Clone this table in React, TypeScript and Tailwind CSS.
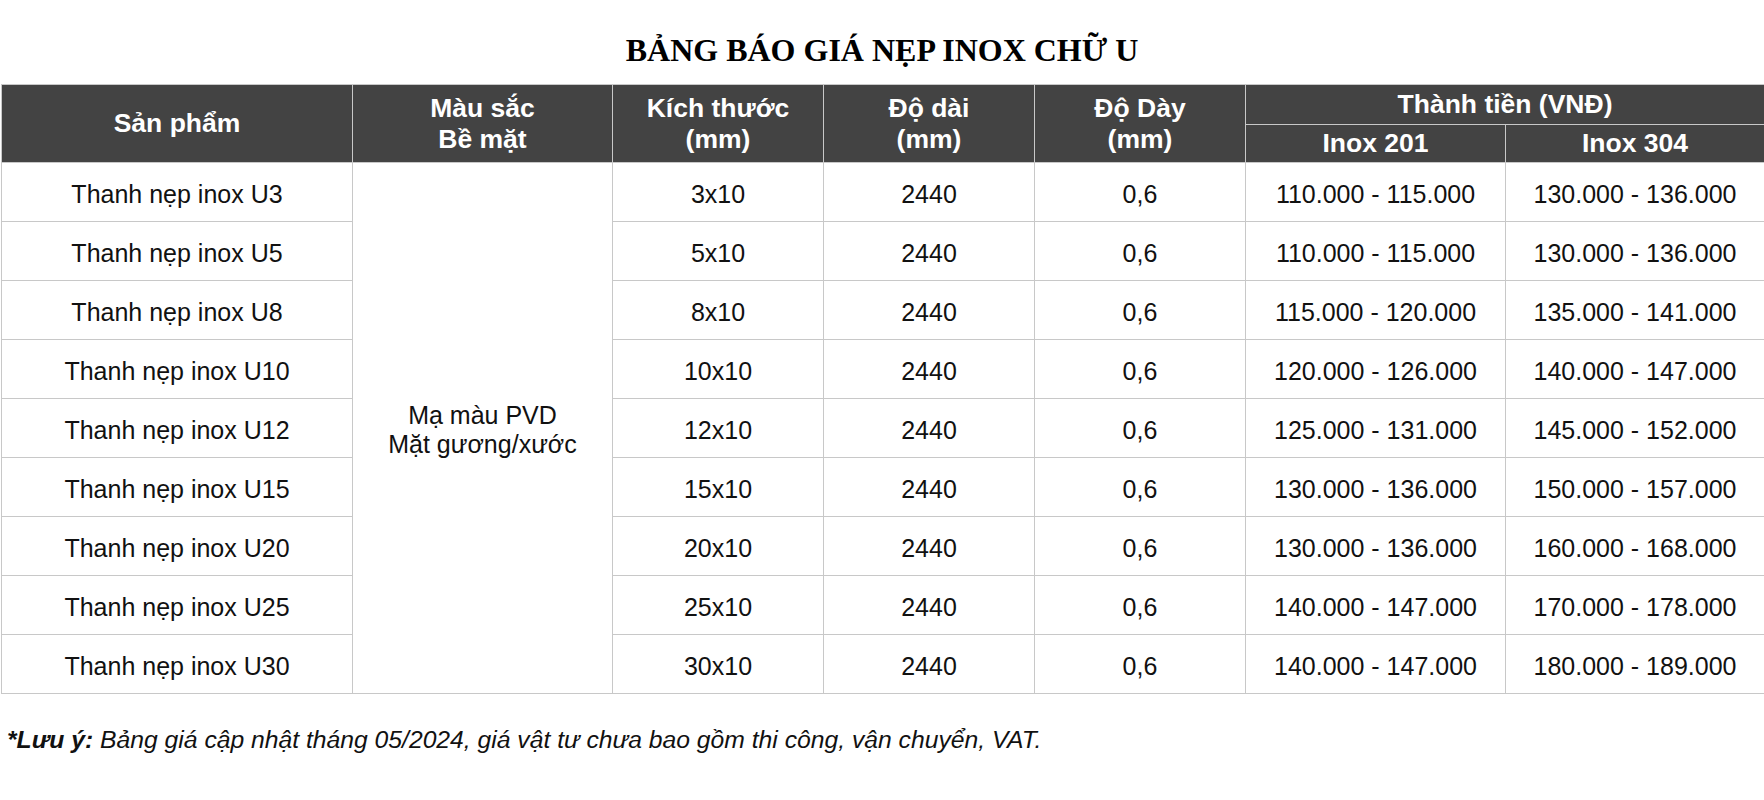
const ROWS = [
  { name: 'Thanh nẹp inox U3', size: '3x10', p201: '110.000 - 115.000', p304: '130.000 - 136.000' },
  { name: 'Thanh nẹp inox U5', size: '5x10', p201: '110.000 - 115.000', p304: '130.000 - 136.000' },
  { name: 'Thanh nẹp inox U8', size: '8x10', p201: '115.000 - 120.000', p304: '135.000 - 141.000' },
  { name: 'Thanh nẹp inox U10', size: '10x10', p201: '120.000 - 126.000', p304: '140.000 - 147.000' },
  { name: 'Thanh nẹp inox U12', size: '12x10', p201: '125.000 - 131.000', p304: '145.000 - 152.000' },
  { name: 'Thanh nẹp inox U15', size: '15x10', p201: '130.000 - 136.000', p304: '150.000 - 157.000' },
  { name: 'Thanh nẹp inox U20', size: '20x10', p201: '130.000 - 136.000', p304: '160.000 - 168.000' },
  { name: 'Thanh nẹp inox U25', size: '25x10', p201: '140.000 - 147.000', p304: '170.000 - 178.000' },
  { name: 'Thanh nẹp inox U30', size: '30x10', p201: '140.000 - 147.000', p304: '180.000 - 189.000' },
];

const th = 'border border-[#c8c8c8] bg-[#434343] text-white font-bold text-[26.5px] leading-[31px] text-center align-middle p-0';
const td = 'border border-[#c8c8c8] text-center align-middle px-0 pt-[4px] pb-0 h-[59px]';

export default function App() {
  return (
    <div className="w-[1764px] bg-white text-black font-['Liberation_Sans',Arial,sans-serif]">
      <div className="h-[84px] pt-[16px] flex items-center justify-center">
        <h1 className="font-['Liberation_Serif','Times_New_Roman',serif] font-bold text-[32px] leading-[40px] text-black">
          BẢNG BÁO GIÁ NẸP INOX CHỮ U
        </h1>
      </div>

      <table className="ml-px w-[1763px] table-fixed border-collapse text-[25px] leading-[29px] text-[#111]">
        <colgroup>
          <col className="w-[351px]" />
          <col className="w-[260px]" />
          <col className="w-[211px]" />
          <col className="w-[211px]" />
          <col className="w-[211px]" />
          <col className="w-[260px]" />
          <col className="w-[259px]" />
        </colgroup>
        <thead>
          <tr className="h-[40px]">
            <th rowSpan={2} className={th}>Sản phẩm</th>
            <th rowSpan={2} className={th}>Màu sắc<br />Bề mặt</th>
            <th rowSpan={2} className={th}>Kích thước<br />(mm)</th>
            <th rowSpan={2} className={th}>Độ dài<br />(mm)</th>
            <th rowSpan={2} className={th}>Độ Dày<br />(mm)</th>
            <th colSpan={2} className={th}>Thành tiền (VNĐ)</th>
          </tr>
          <tr className="h-[38px]">
            <th className={th}>Inox 201</th>
            <th className={th}>Inox 304</th>
          </tr>
        </thead>
        <tbody>
          {ROWS.map((r, i) => (
            <tr key={r.name}>
              <td className={td}>{r.name}</td>
              {i === 0 && (
                <td rowSpan={ROWS.length} className={td}>
                  Mạ màu PVD<br />Mặt gương/xước
                </td>
              )}
              <td className={td}>{r.size}</td>
              <td className={td}>2440</td>
              <td className={td}>0,6</td>
              <td className={td}>{r.p201}</td>
              <td className={td}>{r.p304}</td>
            </tr>
          ))}
        </tbody>
      </table>

      <p className="mt-[31px] pl-[7px] text-[24.7px] leading-[30px] italic text-[#111]">
        <span className="font-bold">*Lưu ý:</span> Bảng giá cập nhật tháng 05/2024, giá vật tư chưa bao gồm thi công, vận chuyển, VAT.
      </p>
    </div>
  );
}
